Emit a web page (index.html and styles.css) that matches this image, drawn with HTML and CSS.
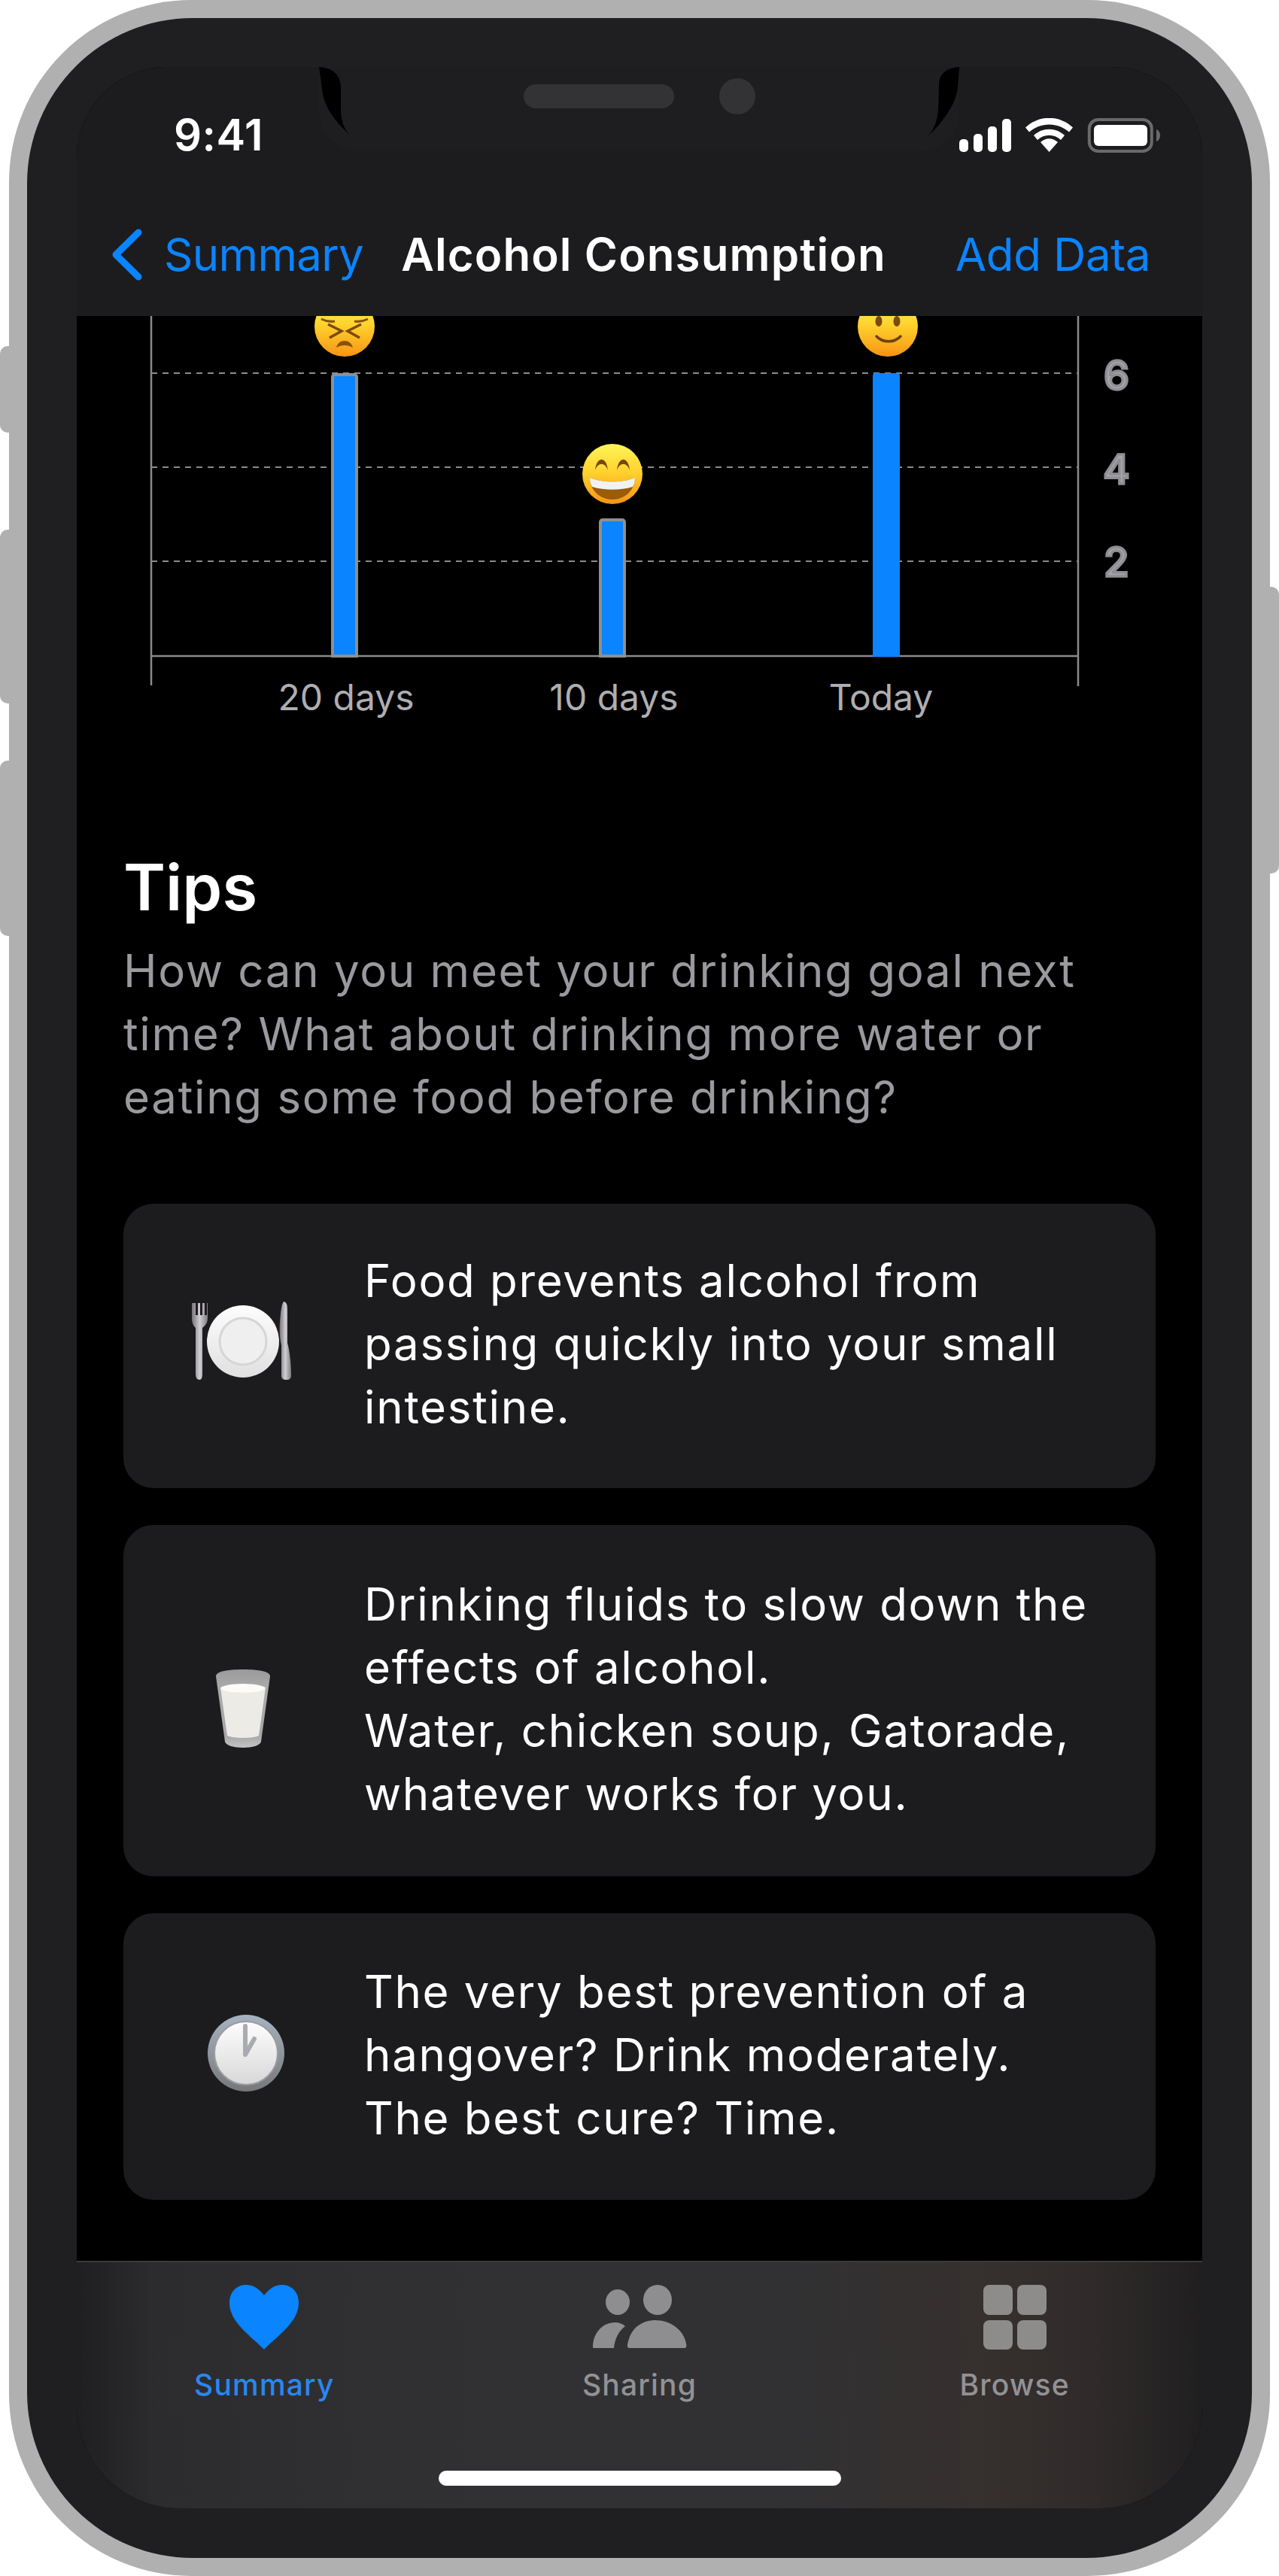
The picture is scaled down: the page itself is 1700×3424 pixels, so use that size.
FILE: index.html
```html
<!DOCTYPE html>
<html lang="en">
<head>
<meta charset="utf-8">
<title>Alcohol Consumption</title>
<link rel="stylesheet" href="styles.css">
</head>
<body>
<div class="device">
  <span class="side-btn btn-a"></span>
  <span class="side-btn btn-b"></span>
  <span class="side-btn btn-c"></span>
  <span class="side-btn btn-d"></span>
  <div class="bezel">
    <div class="screen">
      <header class="top">
        <div class="notch">
          <svg class="cusps" width="851" height="112" viewBox="0 0 851 112">
            <path fill="#000" d="M0 0C18 1 28 10 29 26L29 58C30 75 34 84 43 92C20 72 5 50 4 28Z"/>
            <path fill="#000" d="M851 0C833 1 823 10 824 26L823 58C821 75 817 84 808 93C831 72 846 50 849 28Z"/>
          </svg>
          <span class="speaker"></span>
          <span class="camera"></span>
        </div>
        <div class="status">
          <span class="clock">9:41</span>
          <svg class="status-icons" width="268" height="46" viewBox="0 0 268 46">
            <g fill="#fff">
              <rect x="0" y="28" width="12" height="17" rx="5"/>
              <rect x="19" y="21" width="12" height="24" rx="5"/>
              <rect x="38" y="11" width="12" height="34" rx="5"/>
              <rect x="57" y="1" width="12" height="44" rx="5"/>
              <path d="M119.500 45L108 32C115 25.500 124 25.500 131 32Z"/>
              <path d="M99 23L104 29C113 20.500 126 20.500 135 29L140 23C128.500 12 110.500 12 99 23Z"/>
              <path d="M88 12.500L93 18.500C108 5 131 5 146 18.500L151 12.500C133 -4.500 106 -4.500 88 12.500Z"/>
              <rect x="179" y="9" width="71" height="28" rx="6"/>
            </g>
            <rect x="172.800" y="2" width="83" height="42" rx="12" fill="none" stroke="#69696b" stroke-width="4"/>
            <path d="M262 15C265 16 267 19 267 23C267 27 265 30 262 31Z" fill="#69696b"/>
          </svg>
        </div>
        <nav class="navbar">
          <a class="back">
            <svg class="chevron" width="42" height="69" viewBox="0 0 42 69"><path d="M36 5L6 34.500L36 64" fill="none" stroke="#0a84ff" stroke-width="9" stroke-linecap="round" stroke-linejoin="round"/></svg>
            <span>Summary</span>
          </a>
          <span class="title">Alcohol Consumption</span>
          <a class="action">Add Data</a>
        </nav>
      </header>

      <main class="content">
        <svg class="chart" width="1496" height="560" viewBox="102 420 1496 560">
          <g stroke="#8c8c8e" stroke-width="2" stroke-dasharray="8 7" fill="none">
            <path d="M201 496H1433"/>
            <path d="M201 621H1433"/>
            <path d="M201 746H1433"/>
          </g>
          <g stroke="#8a8a8c" stroke-width="2.500" fill="none">
            <path d="M201 420V911"/>
            <path d="M1433 420V912"/>
            <path d="M201 872H1433"/>
          </g>
          <path d="M442 872V501a3 3 0 0 1 3-3H471a3 3 0 0 1 3 3V872Z" fill="#0a84ff" stroke="#8e8e93" stroke-width="4"/>
          <path d="M798 872V694a3 3 0 0 1 3-3H827a3 3 0 0 1 3 3V872Z" fill="#0a84ff" stroke="#8e8e93" stroke-width="4"/>
          <path d="M1160 873V500a4 4 0 0 1 4-4H1192a4 4 0 0 1 4 4V873Z" fill="#0a84ff"/>
          <defs>
            <linearGradient id="face" x1="0" y1="0" x2="0" y2="1">
              <stop offset="0" stop-color="#fff45a"/>
              <stop offset="0.45" stop-color="#ffd42e"/>
              <stop offset="1" stop-color="#f79414"/>
            </linearGradient>
            <linearGradient id="plate" x1="0" y1="0" x2="0" y2="1">
              <stop offset="0" stop-color="#fdfdfd"/>
              <stop offset="1" stop-color="#e0e0e0"/>
            </linearGradient>
          </defs>
          <g>
            <circle cx="458" cy="434" r="40" fill="url(#face)"/>
            <path d="M427 424C433 427 439 428 445 427" fill="none" stroke="#8a5206" stroke-width="3"/>
            <path d="M489 424C483 427 477 428 471 427" fill="none" stroke="#8a5206" stroke-width="3"/>
            <path d="M436 431L454 440L438 449" fill="none" stroke="#7d4a06" stroke-width="3.500"/>
            <path d="M480 431L462 440L478 449" fill="none" stroke="#7d4a06" stroke-width="3.500"/>
            <path d="M447 462C450 450 466 450 469 462C462 458 454 458 447 462Z" fill="#8a5206"/>
          </g>
          <g>
            <circle cx="814" cy="630" r="40" fill="url(#face)"/>
            <path d="M791 625C793 606 806 606 808 625C804 614 795 614 791 625Z" fill="#7a4606"/>
            <path d="M820 625C822 606 835 606 837 625C833 614 824 614 820 625Z" fill="#7a4606"/>
            <path d="M784 635C800 642 828 642 844 635C844 652 830 664 814 664C798 664 784 652 784 635Z" fill="#9a5c08"/>
            <path d="M784 635C800 642 828 642 844 635C844 640 843 644 841 647C825 652 803 652 787 647C785 644 784 640 784 635Z" fill="#f2f2f2"/>
          </g>
          <g>
            <circle cx="1180" cy="434" r="40" fill="url(#face)"/>
            <ellipse cx="1168" cy="427" rx="4.500" ry="7" fill="#7a4a10"/>
            <ellipse cx="1192" cy="427" rx="4.500" ry="7" fill="#7a4a10"/>
            <path d="M1165 447C1173 456 1189 456 1197 447" fill="none" stroke="#6d4210" stroke-width="3.500" stroke-linecap="round"/>
          </g>
          <g class="y-labels">
            <text x="1484" y="518">6</text>
            <text x="1484" y="643">4</text>
            <text x="1484" y="766">2</text>
          </g>
          <g class="x-labels">
            <text x="460" y="944">20 days</text>
            <text x="816" y="944">10 days</text>
            <text x="1171" y="944">Today</text>
          </g>
        </svg>

        <section class="tips">
          <h2>Tips</h2>
          <p class="lead">How can you meet your drinking goal next time? What about drinking more water or eating some food before drinking?</p>

          <article class="card card-food">
            <div class="card-icon">
              <svg width="132" height="104" viewBox="0 0 132 104">
                <defs>
                  <linearGradient id="metal" x1="0" y1="0" x2="1" y2="0">
                    <stop offset="0" stop-color="#77757a"/>
                    <stop offset="0.5" stop-color="#d0ced2"/>
                    <stop offset="1" stop-color="#7f7d82"/>
                  </linearGradient>
                </defs>
                <path d="M2 2H5V18H8V2H11V18H14V2H17V18H20V2H21V22C21 30 16 33 14 35V96C14 101 13 104 10 104C7 104 5 101 5 96V35C3 33 0 30 0 22V2Z" fill="url(#metal)"/>
                <circle cx="68" cy="53" r="48" fill="url(#plate)"/>
                <circle cx="68" cy="53" r="31" fill="#efefef" stroke="#d6d6d6" stroke-width="3"/>
                <path d="M122 0C126 1 127 4 127 10V55C129 62 132 78 132 98C132 102 130 104 126 104C121 104 119 102 119 98V58C117 50 116 40 117 28C118 14 119 4 122 0Z" fill="url(#metal)"/>
              </svg>
            </div>
            <p>Food prevents alcohol from passing quickly into your small intestine.</p>
          </article>

          <article class="card card-milk">
            <div class="card-icon">
              <svg width="72" height="104" viewBox="0 0 72 104">
                <defs>
                  <linearGradient id="glass" x1="0" y1="0" x2="0" y2="1">
                    <stop offset="0" stop-color="#9a9a9b"/>
                    <stop offset="0.2" stop-color="#a8a8a8"/>
                    <stop offset="0.85" stop-color="#a8a8a8"/>
                    <stop offset="1" stop-color="#c4c4c4"/>
                  </linearGradient>
                </defs>
                <path d="M0 9C0 3 14 0 36 0C58 0 72 3 72 9L60 96C59 101 48 104 36 104C24 104 13 101 12 96Z" fill="url(#glass)"/>
                <path d="M6 24C16 19 56 19 66 24L57 88C50 92 22 92 15 88Z" fill="#ecebe6"/>
                <ellipse cx="36" cy="25" rx="29" ry="6" fill="#fbfbf8"/>
              </svg>
            </div>
            <p>Drinking fluids to slow down the effects of alcohol.<br>Water, chicken soup, Gatorade, whatever works for you.</p>
          </article>

          <article class="card card-clock">
            <div class="card-icon">
              <svg width="102" height="102" viewBox="0 0 102 102">
                <defs>
                  <linearGradient id="rim" x1="0" y1="0" x2="0" y2="1">
                    <stop offset="0" stop-color="#a5b3c2"/>
                    <stop offset="1" stop-color="#77777a"/>
                  </linearGradient>
                  <linearGradient id="dial" x1="0" y1="0" x2="0" y2="1">
                    <stop offset="0" stop-color="#fdfdfd"/>
                    <stop offset="1" stop-color="#d8d8d8"/>
                  </linearGradient>
                </defs>
                <circle cx="51" cy="51" r="51" fill="url(#rim)"/>
                <circle cx="51" cy="51" r="42" fill="url(#dial)" stroke="#9c9c9e" stroke-width="2"/>
                <path d="M50 15V53L62 32" fill="none" stroke="#a9abae" stroke-width="6" stroke-linecap="round" stroke-linejoin="round"/>
              </svg>
            </div>
            <p>The very best prevention of a hangover? Drink moderately.<br>The best cure? Time.</p>
          </article>
        </section>
      </main>

      <footer class="tabbar">
        <div class="tabs">
          <div class="tab tab-on">
            <svg class="tab-icon" width="94" height="86" viewBox="0 0 94 86"><path d="M47 86C30 68 1 50 1 24C1 9 11 0 23 0C34 0 42 7 47 14C52 7 60 0 71 0C83 0 93 9 93 24C93 50 64 68 47 86Z" fill="#0a84ff"/></svg>
            <span>Summary</span>
          </div>
          <div class="tab">
            <svg class="tab-icon" width="126" height="86" viewBox="0 0 126 86">
              <ellipse cx="34" cy="23" rx="16" ry="17" fill="#8e8e90"/>
              <path d="M1 83C1 64 14 50 30 50C36 50 41 52 44 55C35 62 30 72 29 84H4C2 84 1 84 1 83Z" fill="#8e8e90"/>
              <ellipse cx="87" cy="20" rx="19" ry="20" fill="#8e8e90"/>
              <path d="M49 84C45 84 48 74 49 72C54 55 69 47 84 47C104 47 122 60 125 78C126 82 125 84 122 84Z" fill="#8e8e90"/>
            </svg>
            <span>Sharing</span>
          </div>
          <div class="tab">
            <div class="tab-grid tab-icon">
              <i></i><i></i><i></i><i></i>
            </div>
            <span>Browse</span>
          </div>
        </div>
        <div class="home-bar"></div>
      </footer>
    </div>
  </div>
</div>
</body>
</html>
```

FILE: styles.css
```css
* { box-sizing: border-box; }
html, body { margin: 0; padding: 0; background: #fff; }
body { font-family: "Inter", "Liberation Sans", sans-serif; color: #fff; }

.device {
  position: relative;
  width: 1676px;
  height: 3424px;
  margin: 0 12px;
  padding: 24px;
  background: #b0b0b0;
  border-radius: 242px;
}
.side-btn {
  position: absolute;
  width: 16px;
  background: #b0b0b0;
  border-radius: 10px 0 0 10px;
  left: -12px;
}
.btn-a { top: 460px; height: 115px; }
.btn-b { top: 704px; height: 231px; }
.btn-c { top: 1011px; height: 233px; }
.btn-d { left: auto; right: -12px; top: 780px; height: 381px; border-radius: 0 10px 10px 0; }

.bezel {
  height: 3376px;
  padding: 65px 66px 66px;
  background: #1f1f21;
  border-radius: 220px;
}
.screen {
  display: flex;
  flex-direction: column;
  height: 3245px;
  background: #000;
  border-radius: 120px 120px 136px 136px;
  overflow: hidden;
}

.top {
  position: relative;
  flex: none;
  height: 331px;
  background: #1c1c1e;
  display: flex;
  flex-direction: column;
}
.notch {
  position: absolute;
  left: 322px;
  top: 0;
  width: 851px;
  height: 112px;
  background: #1e1e20;
  border-radius: 0 0 52px 52px;
}
.cusps { position: absolute; left: 0; top: 0; }
.speaker {
  position: absolute;
  left: 272px;
  top: 23px;
  width: 200px;
  height: 32px;
  background: #333335;
  border-radius: 16px;
}
.camera {
  position: absolute;
  left: 532px;
  top: 15px;
  width: 48px;
  height: 48px;
  background: #333335;
  border-radius: 50%;
}
.status {
  position: relative;
  display: flex;
  align-items: flex-start;
  padding: 60px 55px 0 129px;
  height: 120px;
}
.clock {
  font-size: 58px;
  line-height: 60px;
  font-weight: 600;
  letter-spacing: 0.5px;
}
.status-icons { margin-left: auto; margin-top: 8px; }

.navbar {
  display: flex;
  align-items: center;
  height: 70px;
  margin-top: 94px;
  padding: 0 69px 0 46px;
  font-size: 60px;
  line-height: 70px;
}
.back {
  display: flex;
  align-items: center;
  gap: 28px;
  color: #0a84ff;
  margin-right: 50px;
  letter-spacing: -0.7px;
}
.title { font-weight: 600; letter-spacing: 1.1px; }
.action { color: #0a84ff; margin-left: auto; letter-spacing: -0.4px; }

.content { flex: 1; background: #000; overflow: hidden; }
.chart { display: block; }
.y-labels text {
  font-family: "Inter", sans-serif;
  font-size: 54px;
  font-weight: 500;
  text-anchor: middle;
  fill: #a6a6aa;
  stroke: #8e8e93;
  stroke-width: 3.5px;
}
.x-labels text {
  font-family: "Inter", sans-serif;
  font-size: 48px;
  text-anchor: middle;
  fill: #aeaeb2;
}

.tips { padding: 150px 62px 0; }
.tips h2 {
  margin: 0;
  font-size: 85px;
  line-height: 100px;
  font-weight: 600;
}
.lead {
  margin: 18px 0 0;
  font-size: 60px;
  line-height: 84px;
  letter-spacing: 1.7px;
  color: #99999e;
}
.card {
  display: flex;
  align-items: center;
  margin-top: 49px;
  background: #1c1c1e;
  border-radius: 40px;
  padding: 0 40px 0 0;
  font-size: 60px;
  line-height: 84px;
  letter-spacing: 1.7px;
}
.lead + .card { margin-top: 100px; }
.card p { margin: 0 0 6px; }
.card-food { height: 378px; }
.card-milk { height: 467px; }
.card-clock { height: 381px; }
.card-icon {
  flex: none;
  width: 320px;
  display: flex;
  justify-content: center;
}
.card-icon svg { display: block; }
.card-food svg { margin: 0 6px 14px 0; }
.card-milk svg { margin: 20px 2px 0 0; }
.card-clock svg { margin: 0 0 10px 6px; }

.tabbar {
  flex: none;
  height: 329px;
  border-top: 2px solid #3a3a3c;
  background: linear-gradient(90deg, #1f1f21 0, #2c2c2e 7%, #313133 35%, #313133 62%, #36302f 80%, #302b2a 90%, #201f20 100%);
  display: flex;
  flex-direction: column;
}
.tabs {
  display: flex;
  justify-content: space-between;
  padding: 30px 0 0;
  height: 277px;
}
.tab {
  flex: 1;
  display: flex;
  flex-direction: column;
  align-items: center;
  color: #929294;
  font-size: 39px;
  line-height: 46px;
  font-weight: 500;
  letter-spacing: 1.2px;
}
.tab-on { color: #2a86f0; }
.tab-icon { flex: none; display: block; height: 86px; margin-bottom: 24px; }
.tab-grid {
  display: grid;
  grid-template-columns: 39px 39px;
  grid-template-rows: 40px 39px;
  gap: 7px 6px;
}
.tab-grid i { background: #8e8b8b; border-radius: 8px; }
.home-bar {
  width: 535px;
  height: 20px;
  margin-left: 481px;
  background: #fff;
  border-radius: 10px;
}
```
